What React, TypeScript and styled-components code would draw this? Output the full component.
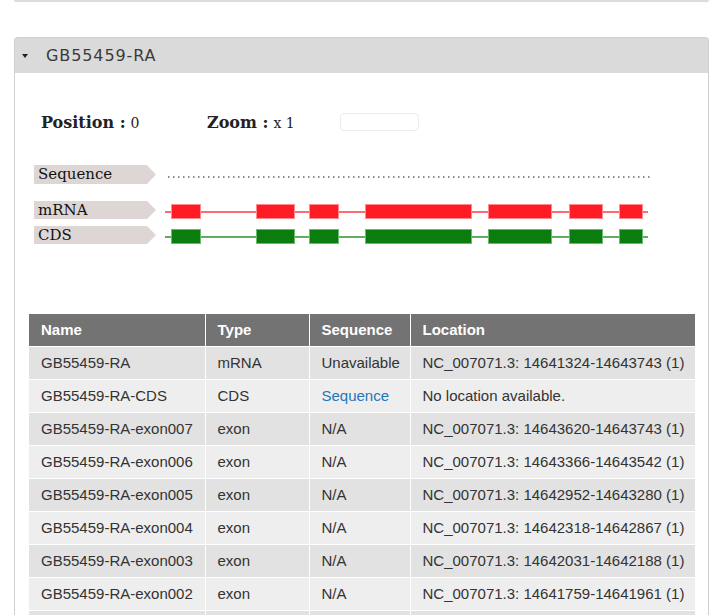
import React from "react";
import styled, { createGlobalStyle } from "styled-components";

const Global = createGlobalStyle`
  html, body { margin: 0; padding: 0; background: #fff; }
  body { font-family: "Liberation Sans", Arial, sans-serif; overflow: hidden; }
`;

const Page = styled.div`
  width: 714px;
  height: 615px;
  overflow: hidden;
`;

const PrevPanelEdge = styled.div`
  margin: 0 5px 0 14px;
  height: 2px;
  background: #dcdcdc;
  border-radius: 0 0 3px 3px;
`;

const Panel = styled.section`
  margin: 35px 5px 0 14px;
`;

const PanelHeader = styled.header`
  height: 35px;
  background: #dadada;
  border: 1px solid #d0d0d0;
  border-bottom: none;
  border-radius: 4px 4px 0 0;
  display: flex;
  align-items: center;
  padding-left: 7px;
  gap: 18px;
`;

const Caret = styled.span`
  width: 0;
  height: 0;
  border-left: 3.5px solid transparent;
  border-right: 3.5px solid transparent;
  border-top: 4px solid #222;
  margin-top: 1px;
`;

const PanelTitle = styled.h2`
  margin: 0;
  font-family: "DejaVu Sans", Verdana, sans-serif;
  font-weight: normal;
  font-size: 16px;
  letter-spacing: 0.9px;
  color: #3a3a3a;
`;

const PanelBody = styled.div`
  border-left: 1px solid #cfcfcf;
  border-right: 1px solid #cfcfcf;
  padding: 39px 13px 0 14px;
  background: #fff;
`;

const Controls = styled.div`
  display: flex;
  align-items: center;
  padding-left: 12px;
  height: 20px;
  font-family: "DejaVu Serif", Georgia, serif;
  color: #222;
`;

const ControlGroup = styled.div<{ $w: number }>`
  width: ${(p) => p.$w}px;
  display: flex;
  align-items: baseline;
  gap: 5px;
  white-space: nowrap;
`;

const ControlLabel = styled.span`
  font-weight: bold;
  font-size: 16px;
`;

const ControlValue = styled.span`
  font-size: 14px;
`;

const ZoomInput = styled.div`
  width: 77px;
  height: 16px;
  border: 1px solid #ececec;
  border-radius: 4px;
  background: #fff;
`;

const Tracks = styled.div`
  margin-top: 33px;
  padding-left: 5px;
  display: flex;
  flex-direction: column;
`;

const TrackRow = styled.div<{ $gap: number }>`
  display: flex;
  align-items: flex-start;
  gap: 4px;
  margin-top: ${(p) => p.$gap}px;
  height: 19px;
`;

const TrackLabel = styled.div<{ $h: number }>`
  width: 122px;
  height: ${(p) => p.$h}px;
  background: #ded6d4;
  clip-path: polygon(0 0, 92.6% 0, 100% 50%, 92.6% 100%, 0 100%);
  font-family: "DejaVu Serif", Georgia, serif;
  font-size: 15px;
  line-height: ${(p) => p.$h}px;
  color: #111;
  padding-left: 4px;
  box-sizing: border-box;
`;

const TableWrap = styled.div`
  margin-top: 69px;
`;

const Table = styled.table`
  width: 666px;
  border-collapse: collapse;
  table-layout: fixed;
  font-family: "Liberation Sans", Arial, sans-serif;
  font-size: 15px;
`;

const Th = styled.th<{ $w: number }>`
  width: ${(p) => p.$w}px;
  height: 32px;
  padding: 0 12px;
  text-align: left;
  background: #737373;
  color: #fff;
  font-weight: bold;
  border-right: 1px solid #fff;
  box-sizing: border-box;
  &:last-child { border-right: none; }
`;

const Tr = styled.tr<{ $dark: boolean }>`
  background: ${(p) => (p.$dark ? "#e2e2e2" : "#eeeeee")};
`;

const Td = styled.td`
  height: 33px;
  padding: 0 12px 1px;
  color: #333;
  border-top: 1px solid #fff;
  border-right: 1px solid #fff;
  box-sizing: border-box;
  white-space: nowrap;
  &:last-child { border-right: none; }
`;

const Link = styled.a`
  color: #1f77b9;
  text-decoration: none;
`;

const exons: [number, number][] = [
  [11, 41],
  [96, 135],
  [149, 179],
  [205, 312],
  [328, 392],
  [409, 443],
  [459, 483],
];

function SequenceTrack() {
  return (
    <svg width="495" height="19" viewBox="0 0 495 19">
      <line x1="8" y1="12" x2="490" y2="12" stroke="#666" strokeWidth="1.5" strokeDasharray="1.5 3.5" />
    </svg>
  );
}

function FeatureTrack({ fill, stroke, line }: { fill: string; stroke: string; line: string }) {
  return (
    <svg width="495" height="19" viewBox="0 0 495 19">
      <line x1="5" y1="11" x2="488" y2="11" stroke={line} strokeWidth="2" />
      {exons.map(([a, b]) => (
        <rect key={a} x={a + 0.5} y={3.5} width={b - a - 1} height={14} fill={fill} stroke={stroke} strokeWidth="1" />
      ))}
    </svg>
  );
}

type Row = { name: string; type: string; seq: string; link?: boolean; loc: string };

const rows: Row[] = [
  { name: "GB55459-RA", type: "mRNA", seq: "Unavailable", loc: "NC_007071.3: 14641324-14643743 (1)" },
  { name: "GB55459-RA-CDS", type: "CDS", seq: "Sequence", link: true, loc: "No location available." },
  { name: "GB55459-RA-exon007", type: "exon", seq: "N/A", loc: "NC_007071.3: 14643620-14643743 (1)" },
  { name: "GB55459-RA-exon006", type: "exon", seq: "N/A", loc: "NC_007071.3: 14643366-14643542 (1)" },
  { name: "GB55459-RA-exon005", type: "exon", seq: "N/A", loc: "NC_007071.3: 14642952-14643280 (1)" },
  { name: "GB55459-RA-exon004", type: "exon", seq: "N/A", loc: "NC_007071.3: 14642318-14642867 (1)" },
  { name: "GB55459-RA-exon003", type: "exon", seq: "N/A", loc: "NC_007071.3: 14642031-14642188 (1)" },
  { name: "GB55459-RA-exon002", type: "exon", seq: "N/A", loc: "NC_007071.3: 14641759-14641961 (1)" },
  { name: "GB55459-RA-exon001", type: "exon", seq: "N/A", loc: "NC_007071.3: 14641324-14641590 (1)" },
];

export default function App() {
  return (
    <Page>
      <Global />
      <PrevPanelEdge />
      <Panel>
        <PanelHeader>
          <Caret />
          <PanelTitle>GB55459-RA</PanelTitle>
        </PanelHeader>
        <PanelBody>
          <Controls>
            <ControlGroup $w={166}>
              <ControlLabel>Position :</ControlLabel>
              <ControlValue>0</ControlValue>
            </ControlGroup>
            <ControlGroup $w={133}>
              <ControlLabel>Zoom :</ControlLabel>
              <ControlValue>x 1</ControlValue>
            </ControlGroup>
            <ZoomInput />
          </Controls>
          <Tracks>
            <TrackRow $gap={0}>
              <TrackLabel $h={19}>Sequence</TrackLabel>
              <SequenceTrack />
            </TrackRow>
            <TrackRow $gap={17}>
              <TrackLabel $h={18}>mRNA</TrackLabel>
              <FeatureTrack fill="#ff1c24" stroke="#ff8b90" line="#ff6b70" />
            </TrackRow>
            <TrackRow $gap={6}>
              <TrackLabel $h={18}>CDS</TrackLabel>
              <FeatureTrack fill="#0a7d0e" stroke="#6cba6c" line="#5fae60" />
            </TrackRow>
          </Tracks>
          <TableWrap>
            <Table>
              <thead>
                <tr>
                  <Th $w={176}>Name</Th>
                  <Th $w={104}>Type</Th>
                  <Th $w={101}>Sequence</Th>
                  <Th $w={285}>Location</Th>
                </tr>
              </thead>
              <tbody>
                {rows.map((r, i) => (
                  <Tr key={r.name} $dark={i % 2 === 0}>
                    <Td>{r.name}</Td>
                    <Td>{r.type}</Td>
                    <Td>{r.link ? <Link href="#">{r.seq}</Link> : r.seq}</Td>
                    <Td>{r.loc}</Td>
                  </Tr>
                ))}
              </tbody>
            </Table>
          </TableWrap>
        </PanelBody>
      </Panel>
    </Page>
  );
}
